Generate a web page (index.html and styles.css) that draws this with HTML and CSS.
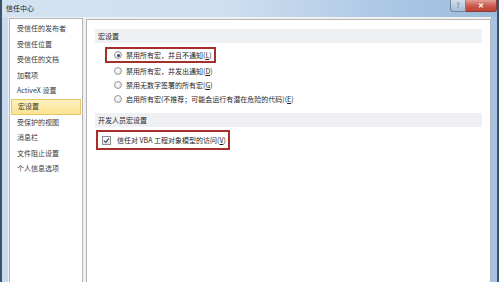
FILE: index.html
```html
<!DOCTYPE html>
<html lang="zh-CN">
<head>
    <meta charset="UTF-8">
    <title>信任中心</title>
    <link rel="stylesheet" href="styles.css">
</head>
<body>
<div class="desk">
    <div class="window">
        <!-- title bar -->
        <div class="titlebar">
            <span class="title">信任中心</span>
            <div class="controls">
                <span class="btn btn-help">?</span>
                <span class="btn btn-close">✕</span>
            </div>
        </div>

        <div class="client">
            <!-- left navigation -->
            <ul class="nav">
                <li>受信任的发布者</li>
                <li>受信任位置</li>
                <li>受信任的文档</li>
                <li>加载项</li>
                <li>ActiveX 设置</li>
                <li class="active">宏设置</li>
                <li>受保护的视图</li>
                <li>消息栏</li>
                <li>文件阻止设置</li>
                <li>个人信息选项</li>
            </ul>

            <!-- settings panel -->
            <div class="main">
                <div class="section-head">宏设置</div>
                <div class="options">
                    <div class="opt marked first">
                        <span class="radio checked"></span>
                        <span>禁用所有宏，并且不通知(<u>L</u>)</span>
                    </div>
                    <div class="opt">
                        <span class="radio"></span>
                        <span>禁用所有宏，并发出通知(<u>D</u>)</span>
                    </div>
                    <div class="opt">
                        <span class="radio"></span>
                        <span>禁用无数字签署的所有宏(<u>G</u>)</span>
                    </div>
                    <div class="opt">
                        <span class="radio"></span>
                        <span>启用所有宏(不推荐；可能会运行有潜在危险的代码)(<u>E</u>)</span>
                    </div>
                </div>

                <div class="section-head dev">开发人员宏设置</div>
                <div class="opt marked check-row">
                    <span class="checkbox">
                        <svg width="7" height="7" viewBox="0 0 7 7"><path d="M1 3.6 L2.8 5.4 L6 1.4" fill="none" stroke="#3d4f72" stroke-width="1.2"/></svg>
                    </span>
                    <span>信任对 VBA 工程对象模型的访问(<u>V</u>)</span>
                </div>
            </div>
        </div>
    </div>
</div>
</body>
</html>
```

FILE: styles.css
```css
body {
    margin: 0;
    font-family: "Noto Sans CJK SC", "Noto Sans", sans-serif;
    font-size: 7px;
    color: #1e1e1e;
}
.desk {
    width: 499px;
    height: 282px;
    overflow: hidden;
    background: #3b5366;
    display: flex;
}
.window {
    margin-left: 2px;
    width: 495px;
    display: flex;
    flex-direction: column;
    background: linear-gradient(to right, #c8dbee, #d7e5f3 40%, #b7cfe8 75%, #a6c2e2);
}

/* title bar */
.titlebar {
    height: 17px;
    display: flex;
    justify-content: space-between;
    align-items: flex-start;
    background: linear-gradient(to right, #d3e2f1, #cfdff0 45%, #aac6e4 80%, #9dbbdc);
}
.title {
    padding-left: 4px;
    line-height: 16px;
    color: #1a1a1a;
}
.controls {
    display: flex;
}
.btn {
    height: 11px;
    line-height: 11px;
    text-align: center;
    font-size: 7px;
    color: #fff;
    border: 1px solid #6f86a0;
    border-top: none;
}
.btn-help {
    width: 14px;
    background: linear-gradient(#d2deea, #a9bdd3);
    color: #5b6c80;
    border-radius: 0 0 0 3px;
}
.btn-close {
    width: 30px;
    background: linear-gradient(#e3a096, #c9574b 55%, #c14436);
    border-left: none;
    border-color: #8a3a36;
    border-radius: 0 0 3px 0;
    font-weight: bold;
}

/* client area */
.client {
    flex: 1;
    display: flex;
    gap: 3px;
    margin: 0 6px;
    padding: 1px 0 0 1px;
    background: #f0f0f0;
}

.nav {
    list-style: none;
    margin: 0;
    padding: 2px 0 0;
    width: 72px;
    background: #fff;
    border: 1px solid #b4b4b4;
    border-bottom: none;
    color: #3a3a3a;
}
.nav li {
    height: 15.6px;
    line-height: 15.6px;
    padding-left: 7px;
    white-space: nowrap;
}
.nav li.active {
    margin: 0 1px;
    padding-left: 6px;
    height: 13.6px;
    line-height: 13.6px;
    background: linear-gradient(#fdf1bf, #fbe390);
    border: 1px solid #e6c668;
}

.main {
    flex: 1;
    margin-top: 1px;
    padding: 9px 8px 0;
    background: #fff;
    border: 1px solid #b4b4b4;
    border-bottom: none;
}
.section-head {
    height: 14px;
    line-height: 14px;
    padding-left: 3px;
    background: #eef0f3;
    color: #2a2a2a;
}
.section-head.dev {
    margin-top: 7px;
}

.options {
    margin-top: 4px;
}
.opt {
    display: flex;
    align-items: center;
    gap: 4px;
    height: 14px;
    line-height: 14px;
    padding-left: 19px;
    white-space: nowrap;
}
.opt.marked {
    width: fit-content;
    border: 2px solid #a3302d;
    height: 12px;
    line-height: 12px;
    padding: 0 2px 0 7px;
    margin-left: 10px;
    margin-bottom: 1px;
}
.opt.check-row {
    margin-left: 1px;
    margin-top: 3px;
    height: 12px;
    padding: 2px 2px 2px 4px;
    gap: 6px;
}
.opt u {
    text-decoration: underline;
}

.radio {
    width: 6px;
    height: 6px;
    border-radius: 50%;
    border: 1px solid #9a9a9a;
    background: radial-gradient(circle at 40% 40%, #fff, #d9d9d9);
    display: flex;
    align-items: center;
    justify-content: center;
}
.radio.checked::after {
    content: "";
    width: 3px;
    height: 3px;
    border-radius: 50%;
    background: #2f4466;
}
.checkbox {
    width: 7px;
    height: 7px;
    border: 1px solid #8e8e8e;
    background: linear-gradient(#fff, #e4e4e4);
    display: flex;
}
.checkbox svg {
    display: block;
}
```
